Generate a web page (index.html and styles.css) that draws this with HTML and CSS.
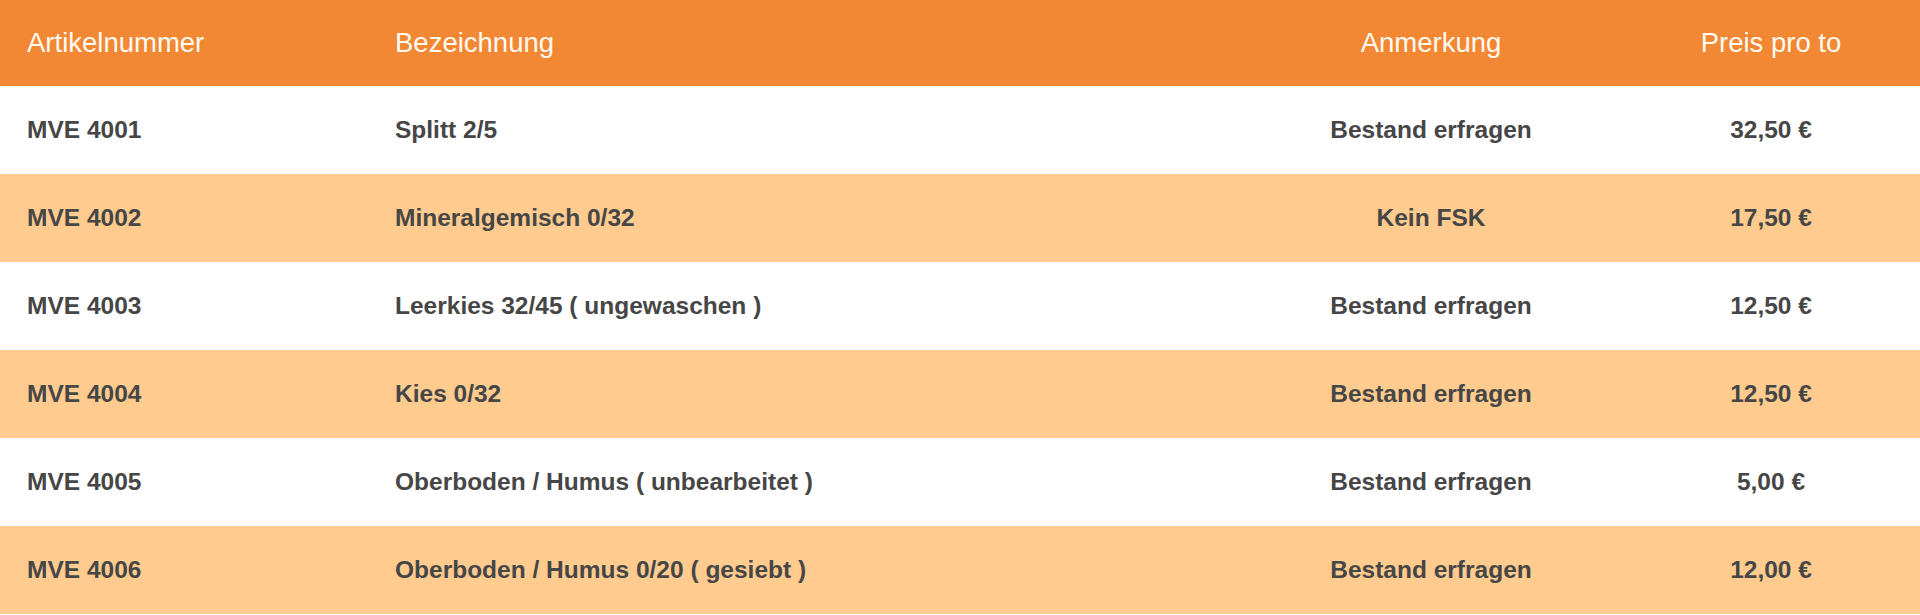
FILE: index.html
```html
<!DOCTYPE html>
<html lang="de">
<head>
<meta charset="utf-8">
<title>Preisliste</title>
<link rel="stylesheet" href="styles.css">
</head>
<body>
<table class="prices">
  <colgroup>
    <col class="c-nr">
    <col class="c-name">
    <col class="c-note">
    <col class="c-price">
  </colgroup>
  <thead>
    <tr class="head">
      <th class="left">Artikelnummer</th>
      <th class="left">Bezeichnung</th>
      <th class="mid">Anmerkung</th>
      <th class="mid">Preis pro to</th>
    </tr>
  </thead>
  <tbody>
    <tr class="row">
      <td class="left">MVE 4001</td>
      <td class="left">Splitt 2/5</td>
      <td class="mid">Bestand erfragen</td>
      <td class="mid">32,50 €</td>
    </tr>
    <tr class="row alt">
      <td class="left">MVE 4002</td>
      <td class="left">Mineralgemisch 0/32</td>
      <td class="mid">Kein FSK</td>
      <td class="mid">17,50 €</td>
    </tr>
    <tr class="row">
      <td class="left">MVE 4003</td>
      <td class="left">Leerkies 32/45 ( ungewaschen )</td>
      <td class="mid">Bestand erfragen</td>
      <td class="mid">12,50 €</td>
    </tr>
    <tr class="row alt">
      <td class="left">MVE 4004</td>
      <td class="left">Kies 0/32</td>
      <td class="mid">Bestand erfragen</td>
      <td class="mid">12,50 €</td>
    </tr>
    <tr class="row">
      <td class="left">MVE 4005</td>
      <td class="left">Oberboden / Humus ( unbearbeitet )</td>
      <td class="mid">Bestand erfragen</td>
      <td class="mid">5,00 €</td>
    </tr>
    <tr class="row alt">
      <td class="left">MVE 4006</td>
      <td class="left">Oberboden / Humus 0/20 ( gesiebt )</td>
      <td class="mid">Bestand erfragen</td>
      <td class="mid">12,00 €</td>
    </tr>
  </tbody>
</table>
</body>
</html>
```
FILE: styles.css
```css
html, body {
  margin: 0;
  padding: 0;
  background: #ffffff;
}

body {
  font-family: "Liberation Sans", Arial, sans-serif;
}

.prices {
  width: 1920px;
  border-collapse: collapse;
  table-layout: fixed;
}

.c-nr { width: 368px; }
.c-name { width: 872px; }
.c-note { width: 382px; }
.c-price { width: 298px; }

.prices th,
.prices td {
  padding: 0;
  vertical-align: middle;
  white-space: nowrap;
}

.head {
  height: 86px;
  background: #f28834;
}

.head th {
  font-size: 27.5px;
  font-weight: normal;
  color: #fffaf2;
}

.row {
  height: 88px;
  background: #ffffff;
}

.row.alt {
  background: #ffcb8e;
}

.row td {
  font-size: 24.5px;
  font-weight: bold;
  color: #464646;
}

.left {
  text-align: left;
  padding-left: 27px !important;
}

.mid {
  text-align: center;
}
```
